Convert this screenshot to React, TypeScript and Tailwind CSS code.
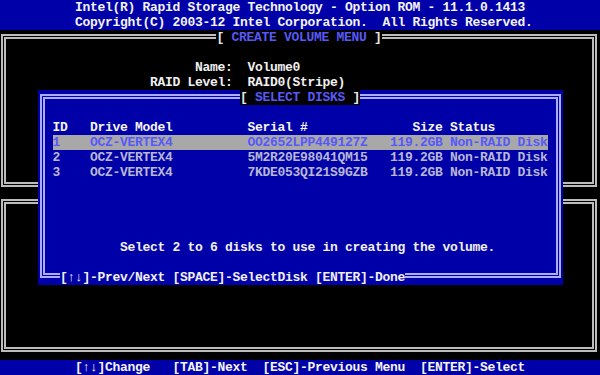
import React from 'react';

// one text cell of the 80x25 screen is 7.5 x 15 px
const BLUE = 'bg-[#0000a8]';

type Disk = { id: string; model: string; serial: string; size: string; status: string };

const disks: Disk[] = [
  { id: '1', model: 'OCZ-VERTEX4', serial: 'OO2652LPP449127Z', size: '119.2GB', status: 'Non-RAID Disk' },
  { id: '2', model: 'OCZ-VERTEX4', serial: '5M2R20E98041QM15', size: '119.2GB', status: 'Non-RAID Disk' },
  { id: '3', model: 'OCZ-VERTEX4', serial: '7KDE053QI21S9GZB', size: '119.2GB', status: 'Non-RAID Disk' },
];

const cols = 'grid grid-cols-[37.5px_157.5px_142.5px_60px_97.5px] w-[495px] h-[15px] whitespace-pre';

const Title: React.FC<{ text: string }> = ({ text }) => (
  <div className="-mt-[9px] h-[15px] flex justify-center">
    <span className="bg-black whitespace-pre text-[#e8e8e8]">
      {'[ '}
      <span className="text-[#5858f8]">{text}</span>
      {' ]'}
    </span>
  </div>
);

const DiskRow: React.FC<{ disk: Disk; selected: boolean }> = ({ disk, selected }) => (
  <div className={`${cols} ${selected ? 'bg-[#a8a8a8] text-[#5858f8]' : 'text-[#b8b8d4]'}`}>
    <span>{disk.id}</span>
    <span>{disk.model}</span>
    <span>{disk.serial}</span>
    <span className="text-right pr-[7.5px]">{disk.size}</span>
    <span className="overflow-visible">{disk.status}</span>
  </div>
);

const SelectDisks: React.FC = () => (
  <div className={`absolute left-[37.5px] top-[60px] w-[525px] h-[195px] ${BLUE} pt-[4px] px-[2px] pb-[7px] flex flex-col`}>
    <div className="flex-1 border-[5px] border-double border-[#acacfc] flex flex-col">
      <Title text="SELECT DISKS" />
      <div className="mt-[15px] pl-[8px]">
        <div className={`${cols} text-[#f4f4f4]`}>
          <span>ID</span>
          <span>Drive Model</span>
          <span>Serial #</span>
          <span className="text-right pr-[7.5px]">Size</span>
          <span>Status</span>
        </div>
        {disks.map((d, i) => (
          <DiskRow key={d.id} disk={d} selected={i === 0} />
        ))}
      </div>
      <div className="mt-[60px] pl-[75.5px] h-[15px] whitespace-pre text-[#f0f0f0]">
        Select 2 to 6 disks to use in creating the volume.
      </div>
      <div className="mt-auto -mb-[12px] h-[15px] pl-[15.5px] flex">
        <span className={`${BLUE} whitespace-pre text-[#f0f0f0]`}>
          [↑↓]-Prev/Next [SPACE]-SelectDisk [ENTER]-Done
        </span>
      </div>
    </div>
  </div>
);

export default function App() {
  return (
    <div className="w-[600px] h-[375px] overflow-hidden bg-black text-white font-['Liberation_Mono',monospace] font-bold text-[13px] tracking-[-0.3px] leading-[15px]">
      <header className={`h-[30px] ${BLUE} pl-[75px] whitespace-pre text-[#f4f4f4]`}>
        <div>Intel(R) Rapid Storage Technology - Option ROM - 11.1.0.1413</div>
        <div>Copyright(C) 2003-12 Intel Corporation.  All Rights Reserved.</div>
      </header>

      <main className="relative h-[330px] pt-[4px] pl-[1px] pr-[3px] flex flex-col gap-[12px]">
        <section className="h-[153px] border-[5px] border-double border-[#bcbcbc]">
          <Title text="CREATE VOLUME MENU" />
          <div className="mt-[15px] grid grid-cols-[226.5px_1fr] gap-x-[15px] whitespace-pre text-[#f0f0f0]">
            <span className="text-right">Name:</span>
            <span>Volume0</span>
            <span className="text-right">RAID Level:</span>
            <span>RAID0(Stripe)</span>
          </div>
        </section>
        <section className="h-[153px] border-[5px] border-double border-[#bcbcbc]" />
        <SelectDisks />
      </main>

      <footer className={`h-[15px] ${BLUE} pl-[75px] whitespace-pre text-[#f4f4f4]`}>
        [↑↓]Change   [TAB]-Next  [ESC]-Previous Menu  [ENTER]-Select
      </footer>
    </div>
  );
}
